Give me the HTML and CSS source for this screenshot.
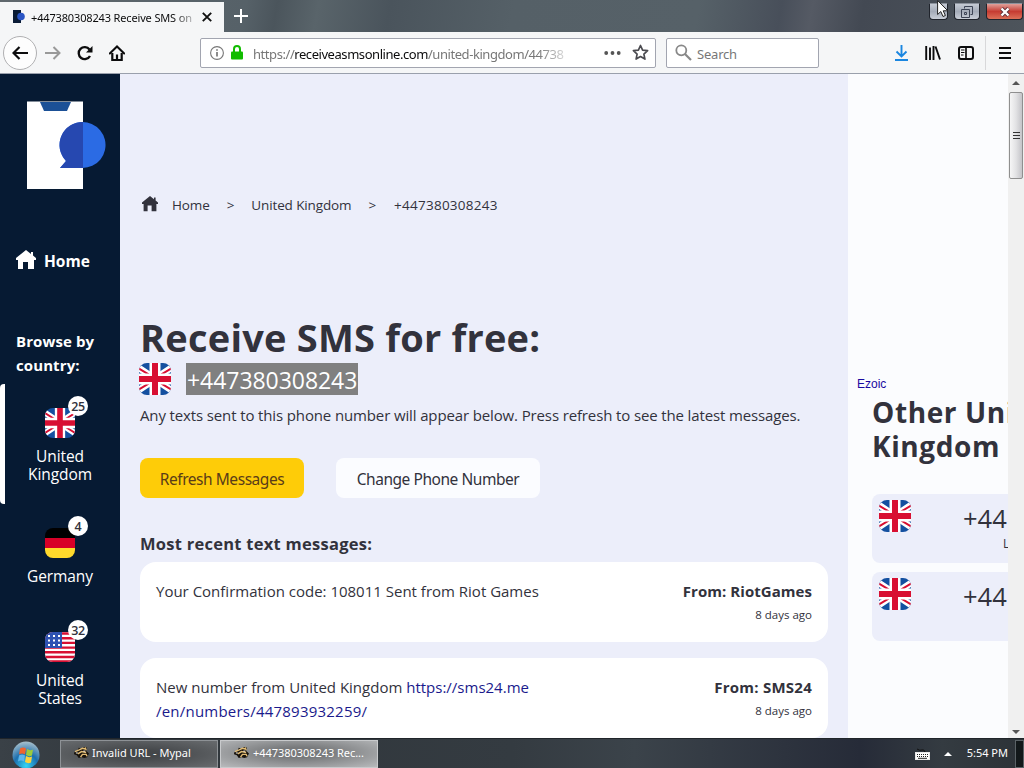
FILE: index.html
```html
<!DOCTYPE html>
<html lang="en">

<head>
    <meta charset="UTF-8">
    <meta name="viewport" content="width=device-width, initial-scale=1.0">
    <title>+447380308243 Receive SMS online</title>
    <link rel="stylesheet" href="styles.css">
</head>

<body>
    <!-- shared flags and icons -->
    <svg class="sprites" width="0" height="0">
        <symbol id="flag_uk" viewBox="0 0 32 32">
            <rect width="32" height="32" fill="#1450a0" />
            <path d="M0 5l12 8M32 5l-12 8M0 27l12-8M32 27l-12-8" stroke="#fff" stroke-width="6.500" />
            <path d="M0 5.500l10 6.200M22 11.700l10-6.200M0 26.500l10-6.200M22 20.300l10 6.200" stroke="#d80f32" stroke-width="2" />
            <path d="M10.500 0h11v10.500H32v11H21.500V32h-11V21.500H0v-11h10.500z" fill="#fff" />
            <path d="M13 0h6v13h13v6H19v13h-6V19H0v-6h13z" fill="#d80f32" />
        </symbol>
        <symbol id="flag_de" viewBox="0 0 30 30">
            <rect width="30" height="10" fill="#000" />
            <rect y="10" width="30" height="10" fill="#d80027" />
            <rect y="20" width="30" height="10" fill="#ffda2c" />
        </symbol>
        <symbol id="flag_us" viewBox="0 0 30 30">
            <rect width="30" height="30" fill="#fff" />
            <path d="M0 1.500h30M0 6.200h30M0 10.900h30M0 15.600h30M0 20.300h30M0 25h30M0 29.500h30" stroke="#d80f32" stroke-width="2.400" />
            <rect width="17" height="16" fill="#2e52b2" />
            <path d="M3 4h2M8 4h2M13 4h2M3 8.500h2M8 8.500h2M13 8.500h2M3 13h2M8 13h2M13 13h2" stroke="#fff" stroke-width="1.800" />
        </symbol>
        <symbol id="house" viewBox="0 0 20 20">
            <path d="M10 0L0 8v2h2v9h5v-7h5v7h6v-9h2V8l-3-2.500V2h-2v2z" fill="currentColor" />
        </symbol>
        <symbol id="raccoon" viewBox="0 0 16 14">
            <path d="M0 7l4-2 1-3 3 1 3-2 3 1-1 3 3 3-2 4-3 1-3-1-3 1-2-3-3-1z" fill="#17120c" />
            <path d="M1 6l4-1.500 4-2 4 1M4 8.500l4-2.500 5 1M7 12l2-3 4 0 1 2M12 1.500l1 3" stroke="#e0bb74" stroke-width="1.500" fill="none" />
            <path d="M2 7.500h2M10 5.500h2" stroke="#fff" />
        </symbol>
    </svg>

    <div class="tab_bar">
        <div class="tab">
            <svg class="tab_icon" width="12" height="14" viewBox="0 0 12 14">
                <path d="M0 0h8v13H0z" fill="#0a1c36" />
                <circle cx="8" cy="6.500" r="3.800" fill="#2a55c4" />
            </svg>
            <span class="tab_title">+447380308243 Receive SMS on</span>
            <svg class="tab_close" width="10" height="10" viewBox="0 0 10 10">
                <path d="M.8.8l8.400 8.400M9.200.8L.8 9.200" stroke="#111" stroke-width="1.900" />
            </svg>
        </div>
        <svg class="new_tab" width="14" height="14" viewBox="0 0 14 14">
            <path d="M7 0v14M0 7h14" stroke="#fff" stroke-width="2" />
        </svg>
        <div class="window_buttons">
            <div class="win_btn win_min"></div>
            <div class="win_btn win_max">
                <svg width="12" height="12" viewBox="0 0 12 12">
                    <path d="M3.500 2.500v-2h8v8h-2M.5 3.500h8v8h-8zM3.500 6.500h2v2h-2z" fill="none" stroke="#3c4354" />
                </svg>
            </div>
            <div class="win_btn win_close">
                <svg width="12" height="10" viewBox="0 0 12 10">
                    <path d="M2.500 1.500l7 7M9.500 1.500l-7 7" stroke="#5b3038" stroke-width="4" />
                    <path d="M2.500 1.500l7 7M9.500 1.500l-7 7" stroke="#fff" stroke-width="2.400" />
                </svg>
            </div>
        </div>
        <svg class="cursor" width="12" height="18" viewBox="0 0 12 18">
            <path d="M.6.500v14l3.200-3 2.200 5 2.400-1-2.200-4.700h4.600z" fill="#fff" stroke="#222" />
        </svg>
    </div>

    <div class="nav_bar">
        <div class="nav_back">
            <svg width="16" height="14" viewBox="0 0 16 14">
                <path d="M7.500 1L1.500 7l6 6M1.500 7H16" fill="none" stroke="#0c0c0d" stroke-width="2.200" />
            </svg>
        </div>
        <svg class="nav_forward" width="16" height="14" viewBox="0 0 16 14">
            <path d="M8.500 1l6 6-6 6M14.500 7H0" fill="none" stroke="#999" stroke-width="2" />
        </svg>
        <svg class="nav_reload" width="16" height="16" viewBox="0 0 16 16">
            <path d="M13 11A6 6 0 1 1 12.500 4.500" fill="none" stroke="#0c0c0d" stroke-width="2.300" />
            <path d="M15.500 1v6.500H9z" fill="#0c0c0d" />
        </svg>
        <svg class="nav_home" width="16" height="16" viewBox="0 0 16 16">
            <path d="M.8 8.500L8 1.500l7.200 7" fill="none" stroke="#0c0c0d" stroke-width="2" stroke-linecap="round" />
            <path d="M3.300 8v7h9.400V8M8 15V9.500" fill="none" stroke="#0c0c0d" stroke-width="2.200" />
        </svg>
        <div class="url_bar">
            <svg width="14" height="14" viewBox="0 0 14 14">
                <circle cx="7" cy="7" r="6.400" fill="none" stroke="#777" stroke-width="1.100" />
                <path d="M7 6v4.500M7 3.300v1.500" stroke="#666" stroke-width="1.500" />
            </svg>
            <svg class="lock" width="12" height="15" viewBox="0 0 12 15">
                <path d="M3 7V4a3 3 0 0 1 6 0v3" fill="none" stroke="#12bc00" stroke-width="2" />
                <rect y="6.500" width="12" height="8" rx="1" fill="#12bc00" />
            </svg>
            <span class="url"><span class="url_gray">https://</span>receiveasmsonline.com<span class="url_gray">/united-kingdom/44738</span></span>
            <svg class="dots" width="17" height="4" viewBox="0 0 17 4">
                <path d="M2.200 2h.01M8.500 2h.01M14.700 2h.01" stroke="#555" stroke-width="3.800" stroke-linecap="round" />
            </svg>
            <svg class="star" width="17" height="17" viewBox="0 0 17 17">
                <path d="M8.500 1.500l2.100 4.600 5 .6-3.700 3.400 1 5-4.400-2.500-4.400 2.500 1-5L1.400 6.700l5-.6z" fill="none" stroke="#4a4a4f" stroke-width="1.700" stroke-linejoin="round" />
            </svg>
        </div>
        <div class="search_bar">
            <svg width="17" height="17" viewBox="0 0 17 17">
                <circle cx="6.300" cy="6.300" r="5" fill="none" stroke="#888" stroke-width="1.800" />
                <path d="M10 10l6 6" stroke="#888" stroke-width="2.200" />
            </svg>
            <span>Search</span>
        </div>
        <div class="tools">
            <svg width="13" height="16" viewBox="0 0 13 16">
                <path d="M6.500 0v11M1.500 6.500l5 5 5-5M0 15h13" fill="none" stroke="#1a86e0" stroke-width="1.900" />
            </svg>
            <svg width="16" height="14" viewBox="0 0 16 14">
                <path d="M1.200 0v14M5 1.500V14M8.500 0v14M10.500.5L15 13.500" stroke="#0c0c0d" stroke-width="1.900" />
            </svg>
            <svg width="16" height="14" viewBox="0 0 16 14">
                <rect x="1" y="1" width="14" height="12" rx="2" fill="none" stroke="#0c0c0d" stroke-width="2" />
                <path d="M8 1v12" stroke="#0c0c0d" stroke-width="1.700" />
                <path d="M3 4h3.500M3 6.500h3.500M3 9h2.500" stroke="#0c0c0d" />
            </svg>
        </div>
        <div class="menu_btn">
            <svg width="12" height="12" viewBox="0 0 12 12">
                <path d="M0 1h12M0 6h12M0 11h12" stroke="#0c0c0d" stroke-width="1.900" />
            </svg>
        </div>
    </div>

    <div class="page">
        <div class="sidebar">
            <svg class="logo" width="80" height="90" viewBox="0 0 80 90">
                <path d="M0 .5h56V88H0z" fill="#fff" />
                <path d="M13 1h31l-4 9H17z" fill="#1b5096" />
                <path d="M33 67l6-7A23 23 0 1 1 55 67z" fill="#2b6be4" />
                <path d="M33 67l6-7A23 23 0 0 1 56 21V67z" fill="#2648b0" />
            </svg>
            <div class="side_home">
                <svg width="20" height="20"><use href="#house" /></svg>
                <span>Home</span>
            </div>
            <div class="browse">Browse by<br>country:</div>
            <div class="country active">
                <div class="country_flag">
                    <svg class="flag" width="30" height="30"><use href="#flag_uk" /></svg>
                    <span class="badge">25</span>
                </div>
                <div>United<br>Kingdom</div>
            </div>
            <div class="country">
                <div class="country_flag">
                    <svg class="flag" width="30" height="30"><use href="#flag_de" /></svg>
                    <span class="badge">4</span>
                </div>
                <div>Germany</div>
            </div>
            <div class="country">
                <div class="country_flag">
                    <svg class="flag" width="30" height="30"><use href="#flag_us" /></svg>
                    <span class="badge">32</span>
                </div>
                <div>United<br>States</div>
            </div>
        </div>

        <div class="main">
            <div class="breadcrumb">
                <svg width="16" height="16"><use href="#house" /></svg>
                <span class="crumb_home">Home</span>
                <span class="crumb_arrow">&gt;</span>
                <span class="crumb_country">United Kingdom</span>
                <span class="crumb_arrow">&gt;</span>
                <span class="crumb_number">+447380308243</span>
            </div>
            <h1>Receive SMS for free:</h1>
            <div class="number_line">
                <svg class="flag" width="32" height="32"><use href="#flag_uk" /></svg>
                <span class="number">+447380308243</span>
            </div>
            <p class="intro">Any texts sent to this phone number will appear below. Press refresh to see the latest messages.</p>
            <div class="buttons">
                <button class="btn refresh">Refresh Messages</button>
                <button class="btn change">Change Phone Number</button>
            </div>
            <h3>Most recent text messages:</h3>
            <div class="message">
                <div class="message_text">Your Confirmation code: 108011 Sent from Riot Games</div>
                <div class="message_info">
                    <div class="from">From: RiotGames</div>
                    <div class="time">8 days ago</div>
                </div>
            </div>
            <div class="message">
                <div class="message_text">New number from United Kingdom <a href="#">https://sms24.me<br><span class="link_end">/en/numbers/447893932259/</span></a></div>
                <div class="message_info">
                    <div class="from from_sms">From: SMS24</div>
                    <div class="time">8 days ago</div>
                </div>
            </div>
        </div>

        <div class="other">
            <div class="ezoic">Ezoic</div>
            <h2>Other United<br>Kingdom</h2>
            <div class="other_card">
                <svg class="flag" width="32" height="32"><use href="#flag_uk" /></svg>
                <div class="other_info">
                    <div class="other_number">+44</div>
                    <div class="last">L</div>
                </div>
            </div>
            <div class="other_card">
                <svg class="flag" width="32" height="32"><use href="#flag_uk" /></svg>
                <div class="other_info">
                    <div class="other_number">+44</div>
                </div>
            </div>
        </div>

        <div class="scrollbar">
            <div class="arrow_up"></div>
            <div class="thumb"><i></i><i></i><i></i></div>
            <div class="arrow_down"></div>
        </div>
    </div>

    <div class="taskbar">
        <svg class="start" width="28" height="28" viewBox="0 0 28 28">
            <defs>
                <radialGradient id="orb" cx=".5" cy=".9" r=".9">
                    <stop offset="0" stop-color="#35d5f5" />
                    <stop offset=".5" stop-color="#1c6fae" />
                    <stop offset="1" stop-color="#a9c0cc" />
                </radialGradient>
            </defs>
            <circle cx="14" cy="14" r="13.500" fill="url(#orb)" />
            <path d="M8 7.500q3-2 6 0l-1 6q-3-2-6 0z" fill="#f0642e" />
            <path d="M15 8q3 2 6 .5l-1 6q-3 1.500-6-.5z" fill="#9ccc3c" />
            <path d="M7 14.500q3-2 6 0l-1 6q-3-2-6 0z" fill="#5db5ec" />
            <path d="M14 15q3 2 6 .5l-1 6q-3 1.500-6-.5z" fill="#fbd13e" />
        </svg>
        <div class="task">
            <svg width="15" height="13"><use href="#raccoon" /></svg>
            <span>Invalid URL - Mypal</span>
        </div>
        <div class="task task_active">
            <svg width="15" height="13"><use href="#raccoon" /></svg>
            <span>+447380308243 Rec...</span>
        </div>
        <div class="tray">
            <svg width="15" height="12" viewBox="0 0 15 12">
                <path d="M2 1q3 2 5 1t3 2" fill="none" stroke="#111" />
                <rect x=".5" y="4.500" width="14" height="7" fill="#fff" stroke="#e8e8e8" />
                <path d="M2 6.500h11M2 8.500h11" stroke="#222" stroke-dasharray="1 1" />
                <path d="M3 10.300h9" stroke="#222" />
            </svg>
            <div class="tray_arrow"></div>
            <span class="clock">5:54 PM</span>
            <div class="show_desktop"></div>
        </div>
    </div>
</body>

</html>
```
FILE: styles.css
```css
* {
    box-sizing: border-box;
}

body {
    margin: 0;
    width: 1024px;
    height: 768px;
    overflow: hidden;
    display: flex;
    flex-direction: column;
    font-family: "Open Sans", "Noto Sans", sans-serif;
    color: #32323c;
    white-space: nowrap;
}

svg {
    display: block;
    flex: none;
}

.sprites {
    position: absolute;
}

/* browser window */
.tab_bar {
    position: relative;
    height: 32px;
    flex: none;
    display: flex;
    background: linear-gradient(100deg, #60686d 0, #566168 24%, #4b555c 27%, #59646a 31%, #4a545c 38%, #556067 50%, #566168 68%, #484f5a 76%, #555a64 79%, #434953 84%, #4d545b 100%);
}

.tab {
    width: 224px;
    margin-top: 2px;
    padding: 0 12px 0 13px;
    display: flex;
    align-items: center;
    background: #f5f6f7;
}

.tab_title {
    width: 163px;
    margin-left: 6px;
    overflow: hidden;
    font-family: "Noto Sans", sans-serif;
    font-size: 11px;
    letter-spacing: -0.15px;
    color: #0c0c0d;
    -webkit-mask-image: linear-gradient(to right, #000 143px, transparent 169px);
}

.tab_close {
    margin-left: 8px;
}

.new_tab {
    margin: 9px 0 0 10px;
}

.window_buttons {
    margin: 3px 0 0 auto;
    display: flex;
    gap: 6px;
}

.win_btn {
    height: 17px;
    display: flex;
    align-items: center;
    justify-content: center;
    border: 1px solid #20242c;
    border-top-color: #8c929c;
    border-radius: 0 0 4px 4px;
    background: linear-gradient(#c5cad3, #a4abb8 50%, #c9ced7);
}

.win_min {
    width: 19px;
}

.win_max {
    width: 26px;
}

.win_close {
    width: 37px;
    margin-right: 1px;
    background: linear-gradient(#e0a09a, #c63c32 50%, #dc7058);
}

.cursor {
    position: absolute;
    left: 937px;
    top: 0;
}

.nav_bar {
    height: 42px;
    flex: none;
    display: flex;
    align-items: center;
    background: #f5f6f7;
    border-bottom: 1px solid #9aa0ac;
}

.nav_back {
    width: 34px;
    height: 34px;
    margin-left: 3px;
    display: flex;
    align-items: center;
    justify-content: center;
    border: 1px solid #b0b0b2;
    border-radius: 50%;
    background: #fdfdfd;
}

.nav_forward {
    margin-left: 8px;
}

.nav_reload {
    margin-left: 16px;
}

.nav_home {
    margin-left: 16px;
}

.url_bar,
.search_bar {
    height: 30px;
    display: flex;
    align-items: center;
    border: 1px solid #a2a5b0;
    border-radius: 2px;
    background: #fff;
    font-family: "Noto Sans", sans-serif;
    font-size: 13px;
}

.url_bar {
    width: 456px;
    margin-left: 75px;
    padding-left: 9px;
}

.lock {
    margin-left: 7px;
}

.url {
    width: 320px;
    margin-left: 10px;
    padding-top: 2px;
    overflow: hidden;
    color: #0c0c0d;
    letter-spacing: -0.44px;
    -webkit-mask-image: linear-gradient(to right, #000 285px, transparent 322px);
}

.url_gray {
    color: #777;
}

.dots {
    margin-left: 31px;
}

.star {
    margin-left: 11px;
}

.search_bar {
    width: 153px;
    margin-left: 10px;
    padding-left: 8px;
    gap: 5px;
    color: #777;
    letter-spacing: -0.2px;
}

.search_bar span {
    padding-top: 2px;
}

.tools {
    margin-left: 76px;
    display: flex;
    align-items: center;
    gap: 17px;
}

.menu_btn {
    height: 34px;
    margin-left: 11px;
    padding-left: 13px;
    display: flex;
    align-items: center;
    border-left: 1px solid #d8d8da;
}

/* page */
.page {
    height: 664px;
    flex: none;
    display: flex;
    overflow: hidden;
    background: #eceefa;
}

.sidebar {
    width: 120px;
    flex: none;
    background: #061a33;
    color: #fff;
}

.logo {
    margin: 27px 0 0 27px;
}

.side_home {
    height: 24px;
    margin: 58px 0 0 16px;
    display: flex;
    align-items: center;
    gap: 8px;
    font-size: 15.500px;
    font-weight: 700;
}

.side_home svg {
    margin-bottom: 2px;
}

.browse {
    margin: 56px 0 7px 16px;
    font-size: 15px;
    font-weight: 700;
    line-height: 24px;
    letter-spacing: 0.100px;
}

.country {
    min-height: 104px;
    padding: 24px 0 21px;
    display: flex;
    flex-direction: column;
    align-items: center;
    gap: 9px;
    font-size: 15.500px;
    line-height: 18px;
    letter-spacing: -0.1px;
    text-align: center;
}

.active {
    padding-right: 5px;
    border-left: 5px solid #fff;
    border-radius: 4px;
}

.country_flag {
    position: relative;
}

.badge {
    position: absolute;
    left: 23px;
    top: -12px;
    width: 20px;
    height: 20px;
    border-radius: 50%;
    background: #fff;
    color: #32323c;
    font-size: 12.500px;
    font-weight: 600;
    line-height: 21px;
    letter-spacing: -0.3px;
}

.flag {
    border-radius: 8px;
}

.main {
    width: 728px;
    flex: none;
    padding: 119px 20px 0;
}

.breadcrumb {
    height: 24px;
    padding-left: 2px;
    display: flex;
    align-items: center;
    font-size: 13.500px;
    letter-spacing: -0.12px;
}

.breadcrumb svg {
    margin-bottom: 2px;
}

.crumb_home {
    margin-left: 14px;
}

.crumb_arrow {
    margin: 0 17px;
}

.crumb_number {
    margin-left: 1px;
    letter-spacing: 0.25px;
}

h1 {
    margin: 96px 0 1px;
    font-size: 38px;
    line-height: 48px;
    letter-spacing: 0.22px;
}

.number_line {
    height: 33px;
    display: flex;
    align-items: center;
    gap: 15px;
    margin-left: -1px;
}

.number {
    width: 172px;
    height: 32px;
    padding: 0 1px;
    background: #808080;
    color: #fff;
    font-size: 23px;
    line-height: 34px;
    letter-spacing: -0.05px;
}

.intro {
    margin: 8px 0 0;
    font-size: 15px;
    line-height: 24px;
    letter-spacing: -0.13px;
}

.buttons {
    margin-top: 31px;
    display: flex;
    gap: 32px;
}

.btn {
    height: 40px;
    padding: 2px 0 0;
    border: none;
    border-radius: 8px;
    font-family: "Noto Sans", sans-serif;
    font-size: 15.500px;
    color: #32323c;
    letter-spacing: -0.45px;
}

.refresh {
    width: 164px;
    background: #fecc08;
    color: #5a3c18;
}

.change {
    width: 204px;
    background: #fbfcff;
}

h3 {
    margin: 34px 0 6px;
    font-size: 16.500px;
    line-height: 24px;
    letter-spacing: 0.26px;
}

.message {
    height: 80px;
    margin-bottom: 16px;
    padding: 17px 16px;
    display: flex;
    justify-content: space-between;
    border-radius: 16px;
    background: #fff;
    font-size: 15px;
    line-height: 24px;
}

.message a {
    color: #1a1a8c;
    text-decoration: none;
}

.link_end {
    letter-spacing: 0.22px;
}

.message_info {
    text-align: right;
}

.from {
    font-weight: 700;
    letter-spacing: 0.05px;
}

.from_sms {
    letter-spacing: 0.25px;
}

.time {
    font-size: 11.500px;
}

.other {
    width: 160px;
    flex: none;
    padding: 301px 0 0 24px;
    overflow: hidden;
    background: #fbfcfe;
}

.ezoic {
    margin-left: -15px;
    font-family: "Liberation Sans", Arial, sans-serif;
    font-size: 12px;
    line-height: 18px;
    color: #1a0aa0;
}

h2 {
    margin: 2px 0 31px;
    font-size: 28px;
    line-height: 34px;
    letter-spacing: 0.6px;
}

.other_card {
    width: 240px;
    height: 69px;
    margin-bottom: 9px;
    padding: 6px 7px;
    display: flex;
    border-radius: 8px;
    background: #eceefa;
}

.other_info {
    margin-left: 52px;
}

.other_number {
    font-size: 25.500px;
    line-height: 36px;
}

.last {
    padding-left: 40px;
    font-size: 12px;
    line-height: 16px;
}

.scrollbar {
    width: 16px;
    flex: none;
    display: flex;
    flex-direction: column;
    align-items: center;
    background: #f0f0f0;
}

.arrow_up,
.arrow_down {
    border: 4px solid transparent;
}

.arrow_up {
    margin-top: 3px;
    border-bottom-color: #555;
}

.arrow_down {
    margin: auto 0 0;
    border-top-color: #555;
}

.thumb {
    width: 14px;
    height: 87px;
    margin-top: 7px;
    display: flex;
    flex-direction: column;
    align-items: center;
    justify-content: center;
    gap: 2px;
    border: 1px solid #8f8f8f;
    border-radius: 2px;
    background: linear-gradient(to right, #f6f6f6, #e2e2e4 50%, #c4c4c8);
}

.thumb i {
    width: 7px;
    height: 1px;
    background: #333;
}

/* taskbar */
.taskbar {
    height: 30px;
    flex: none;
    display: flex;
    align-items: center;
    border-top: 1px solid #20252a;
    background: linear-gradient(to right, #3a4147, #30363b 15%, #343b41 50%, #3b434a 62%, #262b38 84%, #343b41 92%, #2c3237);
    color: #fff;
    font-family: "Noto Sans", sans-serif;
    font-size: 11px;
}

.start {
    margin: 2px 20px 0 12px;
}

.task {
    width: 158px;
    height: 28px;
    margin-right: 2px;
    padding: 0 0 2px 13px;
    display: flex;
    align-items: center;
    gap: 3px;
    border: 1px solid #8e9296;
    background: radial-gradient(ellipse at 50% 50%, #44474a 20%, #686b6e 100%);
}

.task_active {
    gap: 4px;
    border-color: #c8cacc;
    background: radial-gradient(ellipse at 50% 45%, #77797b 25%, #b8babc 100%);
    letter-spacing: -0.05px;
}

.tray {
    height: 100%;
    margin-left: auto;
    display: flex;
    align-items: center;
}

.tray_arrow {
    margin: 0 15px 3px 14px;
    border: 4px solid transparent;
    border-bottom-color: #fff;
}

.clock {
    padding-bottom: 2px;
}

.show_desktop {
    width: 9px;
    height: 28px;
    margin-left: 7px;
    border: 1px solid #5a6266;
    background: #12181a;
}
```
